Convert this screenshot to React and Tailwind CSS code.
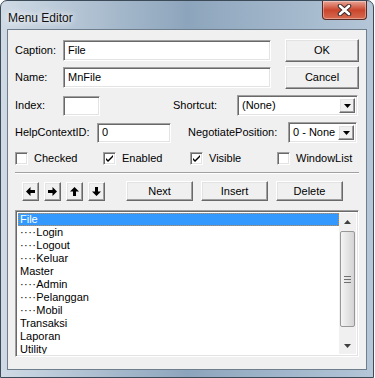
import React from 'react';

// Win7 basic-theme "Menu Editor" dialog (VB6)

const sunken =
  'border border-t-[#a0a0a0] border-l-[#a0a0a0] border-b-white border-r-white shadow-[inset_1px_1px_0_#696969,inset_-1px_-1px_0_#e3e3e3] bg-white';
const raised =
  'border border-t-white border-l-white border-b-[#696969] border-r-[#696969] shadow-[inset_-1px_-1px_0_#a0a0a0,inset_1px_1px_0_#e3e3e3] bg-[#f0f0f0]';

function Field({ className = '', children }) {
  return (
    <div className={`${sunken} flex items-center pl-[4px] ${className}`}>{children}</div>
  );
}

function Button({ className = '', children }) {
  return (
    <div className={`${raised} flex items-center justify-center ${className}`}>{children}</div>
  );
}

function Combo({ className = '', value }) {
  return (
    <div className={`${sunken} flex items-stretch p-[2px] ${className}`}>
      <div className="flex flex-1 items-center pl-[2px]">{value}</div>
      <div className={`${raised} flex w-[16px] items-center justify-center`}>
        <svg width="7" height="4" viewBox="0 0 7 4">
          <path d="M0 0h7L3.5 4z" fill="#000" />
        </svg>
      </div>
    </div>
  );
}

function Check({ checked, label, className = '' }) {
  return (
    <div className={`flex items-center gap-[6px] ${className}`}>
      <div className={`${sunken} flex h-[13px] w-[13px] items-center justify-center`}>
        {checked && (
          <svg width="7" height="7" viewBox="0 0 7 7">
            <path d="M0 3l2 2 5-5v2L2 7 0 5z" fill="#000" />
          </svg>
        )}
      </div>
      <span>{label}</span>
    </div>
  );
}

function ArrowBtn({ dir }) {
  const paths = {
    left: 'M0 4.5L4.5 0v3h4.5v3H4.5v3z',
    right: 'M9 4.5L4.5 0v3H0v3h4.5v3z',
    up: 'M4.5 0L9 4.5H6V9H3V4.5H0z',
    down: 'M4.5 9L9 4.5H6V0H3v4.5H0z',
  };
  return (
    <Button className="h-[19px] w-[17px]">
      <svg width="9" height="9" viewBox="0 0 9 9">
        <path d={paths[dir]} fill="#000" />
      </svg>
    </Button>
  );
}

const items = [
  ['File', 0],
  ['Login', 1],
  ['Logout', 1],
  ['Keluar', 1],
  ['Master', 0],
  ['Admin', 1],
  ['Pelanggan', 1],
  ['Mobil', 1],
  ['Transaksi', 0],
  ['Laporan', 0],
  ['Utility', 0],
];

function ListBox() {
  return (
    <div className={`${sunken} mt-[9px] flex h-[147px] w-[344px] p-[2px]`}>
      <div className="flex flex-1 flex-col overflow-hidden">
        {items.map(([name, lvl], i) =>
          i === 0 ? (
            <div
              key={i}
              className="flex h-[13px] items-center border border-dotted border-[#d08a3a] bg-[#3399ff] pl-[1px] text-white"
            >
              {name}
            </div>
          ) : (
            <div key={i} className="flex h-[13px] items-center pl-[2px]">
              {lvl ? <span className="tracking-[0.4px]">····</span> : null}
              {name}
            </div>
          )
        )}
      </div>
      <div className="flex w-[17px] flex-col bg-[#f0f0f0]">
        <div className="flex h-[17px] items-center justify-center">
          <svg width="7" height="4" viewBox="0 0 7 4">
            <path d="M3.5 0L7 4H0z" fill="#404040" />
          </svg>
        </div>
        <div className="mx-[1px] mt-[1px] flex h-[96px] flex-col items-center justify-center gap-[2px] rounded-[2px] border border-[#979797] bg-gradient-to-r from-[#f4f4f4] to-[#d4d4d4]">
          <div className="h-[1px] w-[7px] bg-[#707070]" />
          <div className="h-[1px] w-[7px] bg-[#707070]" />
          <div className="h-[1px] w-[7px] bg-[#707070]" />
        </div>
        <div className="flex-1" />
        <div className="flex h-[17px] items-center justify-center">
          <svg width="7" height="4" viewBox="0 0 7 4">
            <path d="M0 0h7L3.5 4z" fill="#404040" />
          </svg>
        </div>
      </div>
    </div>
  );
}

export default function App() {
  return (
    <div className="h-[378px] w-[375px] bg-white">
      <div className="flex h-[378px] w-[374px] flex-col rounded-t-[7px] border border-[#3d4a57] bg-gradient-to-r from-[#cfdae5] via-[#8da5bc] to-[#b4c6d8] font-['Liberation_Sans',Arial,sans-serif] text-[11px] text-black">
        {/* title bar */}
        <div className="flex h-[28px] items-start justify-between">
          <div className="pl-[7px] pt-[8px] text-[12px] text-[#111] [text-shadow:0_0_6px_#fff,0_0_10px_#fff]">
            Menu Editor
          </div>
          <div className="mr-[6px] flex h-[19px] w-[45px] items-center justify-center rounded-b-[4px] border border-t-0 border-[#5a2a22] bg-gradient-to-b from-[#e8a596] via-[#c9452c] to-[#d66a50] shadow-[inset_0_0_0_1px_rgba(255,255,255,0.35)]">
            <svg width="15" height="12" viewBox="0 0 15 12">
              <path d="M3 2l9 8M12 2l-9 8" stroke="#3a2a2a" strokeWidth="4.5" strokeLinecap="round" />
              <path d="M3 2l9 8M12 2l-9 8" stroke="#fff" strokeWidth="2.6" strokeLinecap="round" />
            </svg>
          </div>
        </div>

        {/* client area */}
        <div className="mx-[6px] flex h-[341px] flex-col border border-[#6f7e8d] bg-[#f0f0f0] pl-[7px]">
          <div className="mt-[9px] flex h-[23px] items-center">
            <span className="w-[48px]">Caption:</span>
            <Field className="h-[21px] w-[208px]">File</Field>
            <Button className="ml-[14px] h-[23px] w-[74px]">OK</Button>
          </div>
          <div className="mt-[4px] flex h-[23px] items-center">
            <span className="w-[48px]">Name:</span>
            <Field className="h-[21px] w-[208px]">MnFile</Field>
            <Button className="ml-[14px] h-[23px] w-[74px]">Cancel</Button>
          </div>
          <div className="mt-[6px] flex h-[21px] items-center">
            <span className="w-[48px]">Index:</span>
            <Field className="h-[20px] w-[37px]" />
            <span className="ml-[73px] w-[64px]">Shortcut:</span>
            <Combo className="h-[21px] w-[121px]" value="(None)" />
          </div>
          <div className="mt-[6px] flex h-[21px] items-center">
            <span className="w-[82px]">HelpContextID:</span>
            <Field className="h-[20px] w-[74px]">0</Field>
            <span className="ml-[17px] w-[100px]">NegotiatePosition:</span>
            <Combo className="h-[21px] w-[69px]" value="0 - None" />
          </div>
          <div className="mt-[9px] flex h-[13px] items-center">
            <Check className="w-[88px]" label="Checked" />
            <Check className="w-[87px]" checked label="Enabled" />
            <Check className="w-[87px]" checked label="Visible" />
            <Check label="WindowList" />
          </div>
          <div className="mt-[7px] h-[2px] w-[344px] border-t border-b border-t-[#a0a0a0] border-b-white" />
          <div className="mt-[7px] flex h-[20px] items-center">
            <div className="ml-[7px] flex gap-[5px]">
              <ArrowBtn dir="left" />
              <ArrowBtn dir="right" />
              <ArrowBtn dir="up" />
              <ArrowBtn dir="down" />
            </div>
            <Button className="ml-[21px] h-[20px] w-[67px]">Next</Button>
            <Button className="ml-[8px] h-[20px] w-[67px]">Insert</Button>
            <Button className="ml-[8px] h-[20px] w-[67px]">Delete</Button>
          </div>
          <ListBox />
        </div>
      </div>
    </div>
  );
}
